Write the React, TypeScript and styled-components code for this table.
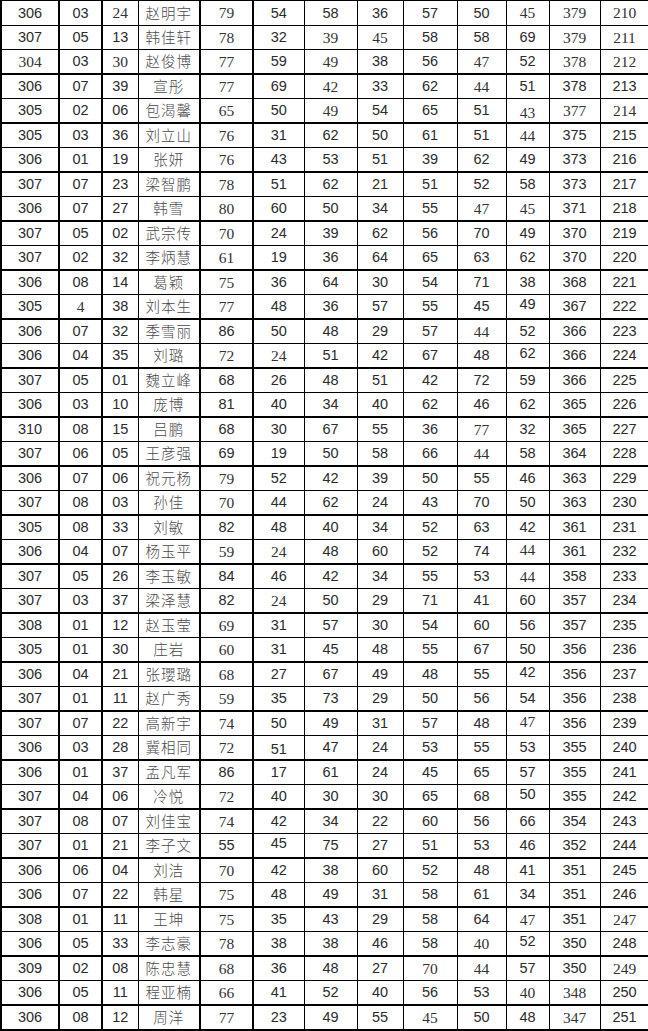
import React from "react";
import styled, { createGlobalStyle } from "styled-components";

const GlobalStyle = createGlobalStyle`
  html, body {
    margin: 0;
    padding: 0;
    background: #fff;
  }
`;

// column widths, measured off the scan
const widths = [58, 43, 36, 62, 53, 51, 53, 46, 54, 49, 43, 51, 49];
// grid lines that came out heavier in the scan (index = column on the right)
const heavyLeft = new Set([0, 1, 2, 4, 5]);

// ~ = serif (Times-like) glyph, _ = sits lower, ^ = sits higher
const rows: string[] = [
  "306 03 ~24 赵明宇 ~79 54 58 36 57 50 ~45 ~379 ~210",
  "307 05 13 韩佳轩 ~78 32 ~39 ~45 58 58 69 ~379 ~211",
  "~304 03 ~30 赵俊博 ~77 59 ~49 38 56 ~47 52 ~378 ~212",
  "306 07 39 宣彤 ~77 69 ~42 33 62 ~44 51 378 213",
  "305 02 06 包渴馨 ~65 50 ~49 54 65 51 ~_43 ~377 ~214",
  "305 03 36 刘立山 ~76 31 62 50 61 51 ~44 375 215",
  "306 01 19 张妍 ~76 43 53 51 39 62 49 373 216",
  "307 07 23 梁智鹏 ~78 51 62 21 51 52 58 373 217",
  "306 07 27 韩雪 ~80 60 50 34 55 ~47 ~45 371 218",
  "307 05 02 武宗传 ~70 24 39 62 56 70 49 370 219",
  "307 02 32 李炳慧 ~61 19 36 64 65 63 62 370 220",
  "306 08 14 葛颖 ~75 36 64 30 54 71 38 368 221",
  "305 ~4 38 刘本生 ~77 48 36 57 55 45 ^49 367 222",
  "306 07 32 季雪丽 86 50 48 29 57 ~44 52 366 223",
  "306 04 35 刘璐 ~72 ~24 51 42 67 48 ^62 366 224",
  "307 05 01 魏立峰 68 26 48 51 42 72 59 366 225",
  "306 03 10 庞博 81 40 34 40 62 46 62 365 226",
  "310 08 15 吕鹏 68 30 67 55 36 ~77 32 365 227",
  "307 06 05 王彦强 69 19 50 58 66 ~44 58 364 228",
  "306 07 06 祝元杨 ~79 52 42 39 50 55 46 363 229",
  "307 08 03 孙佳 ~70 44 62 24 43 70 50 363 230",
  "305 08 33 刘敏 82 48 40 34 52 63 42 361 231",
  "306 04 07 杨玉平 ~59 ~24 48 60 52 74 ~^44 361 232",
  "307 05 26 李玉敏 84 46 42 34 55 53 ~44 358 233",
  "307 03 37 梁泽慧 82 ~24 50 29 71 41 60 357 234",
  "308 01 12 赵玉莹 ~69 31 57 30 54 60 56 357 235",
  "305 01 30 庄岩 ~60 31 45 48 55 67 50 356 236",
  "306 04 21 张瓔璐 ~68 27 67 49 48 55 ^42 356 237",
  "307 01 11 赵广秀 ~59 35 73 29 50 56 54 356 238",
  "307 07 22 高新宇 ~74 50 49 31 57 48 ~^47 356 239",
  "306 03 28 冀相同 ~72 _51 47 24 53 55 53 355 240",
  "306 01 37 孟凡军 86 17 61 24 45 65 57 355 241",
  "307 04 06 冷悦 ~72 40 30 30 65 68 ^50 355 242",
  "307 08 07 刘佳宝 ~74 42 34 22 60 56 66 354 243",
  "307 01 21 李子文 55 ^45 75 27 51 53 46 352 244",
  "306 06 04 刘洁 ~70 42 38 60 52 48 41 351 245",
  "306 07 22 韩星 ~75 48 49 31 58 61 34 351 246",
  "308 01 11 王坤 ~75 35 43 29 58 64 ~47 351 ~247",
  "306 05 33 李志豪 ~78 38 38 46 58 ~40 ^52 350 248",
  "309 02 08 陈忠慧 ~68 36 48 27 ~70 ~44 57 350 ~249",
  "306 05 11 程亚楠 ~66 41 52 40 56 53 ~40 ~348 250",
  "306 08 12 周洋 ~77 23 49 55 ~45 50 48 ~347 251",
];

const Sheet = styled.table`
  width: 648px;
  table-layout: fixed;
  border-collapse: collapse;
  border-top: 1px solid #000;
  border-bottom: 2px solid #000;
  border-left: 2px solid #000;
  border-right: 1px solid #000;
`;

const Row = styled.tr<{ $heavy: boolean }>`
  height: 24.5px;
  td {
    border-bottom: ${(p) => (p.$heavy ? 2 : 1)}px solid #000;
  }
`;

const Cell = styled.td<{ $serif: boolean; $heavyLeft: boolean; $name: boolean; $shift: number }>`
  padding: 0;
  text-align: center;
  vertical-align: middle;
  border-left: ${(p) => (p.$heavyLeft ? 2 : 1)}px solid #000;
  border-top: 1px solid #000;
  color: ${(p) => (p.$name ? "#4a4a4a" : p.$serif ? "#333" : "#2b2b2b")};
  font-family: ${(p) =>
    p.$name
      ? `"Noto Sans CJK SC", "Liberation Serif", serif`
      : p.$serif
      ? `"Liberation Serif", "DejaVu Serif", serif`
      : `"Liberation Sans", Arial, sans-serif`};
  font-size: ${(p) => (p.$name ? 14.5 : p.$serif ? 15.5 : 14.5)}px;
  font-weight: ${(p) => (p.$name ? 300 : 400)};
  line-height: 1;
  letter-spacing: ${(p) => (p.$name ? "1px" : "0")};
  white-space: nowrap;
  overflow: hidden;

  span {
    position: relative;
    top: ${(p) => p.$shift}px;
  }
`;

function parseCell(raw: string) {
  let serif = false;
  let shift = 0;
  let text = raw;
  while (/^[~_^]/.test(text)) {
    if (text[0] === "~") serif = true;
    if (text[0] === "_") shift = 2;
    if (text[0] === "^") shift = -2;
    text = text.slice(1);
  }
  return { text, serif, shift };
}

export default function App() {
  return (
    <>
      <GlobalStyle />
      <Sheet>
        <colgroup>
          {widths.map((w, i) => (
            <col key={i} style={{ width: w }} />
          ))}
        </colgroup>
        <tbody>
          {rows.map((line, r) => (
            <Row key={r} $heavy={r >= 2 && r % 2 === 0}>
              {line.split(" ").map((raw, c) => {
                const { text, serif, shift } = parseCell(raw);
                return (
                  <Cell
                    key={c}
                    $serif={serif}
                    $heavyLeft={heavyLeft.has(c)}
                    $name={c === 3}
                    $shift={shift}
                  >
                    <span>{text}</span>
                  </Cell>
                );
              })}
            </Row>
          ))}
        </tbody>
      </Sheet>
    </>
  );
}
